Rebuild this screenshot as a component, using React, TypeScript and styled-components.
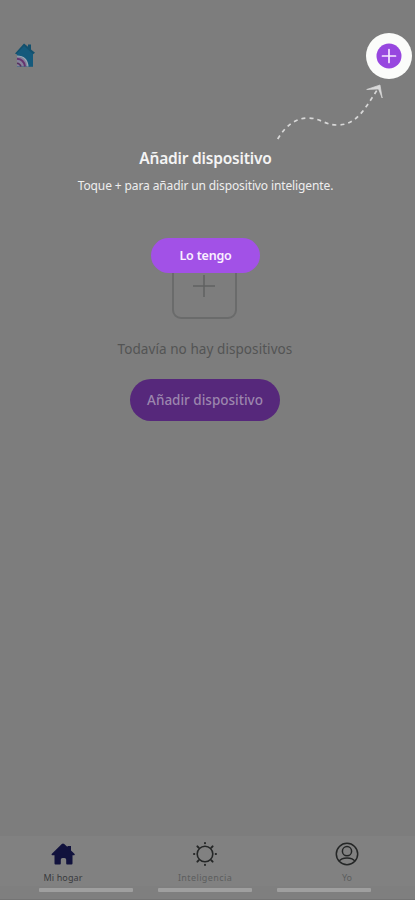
import React from 'react';
import styled, { createGlobalStyle } from 'styled-components';

const GlobalStyle = createGlobalStyle`
  * { box-sizing: border-box; }
  body { margin: 0; background: #7d7d7d; font-family: "Noto Sans", "Open Sans", sans-serif; }
  svg { display: block; }
`;

const Screen = styled.div`
  position: relative;
  display: flex;
  flex-direction: column;
  height: 900px;
  overflow: hidden;
  background: #7d7d7d;
`;

const Header = styled.header`
  height: 110px;
  padding: 41px 14px 0;
`;

const EmptyState = styled.main`
  flex: 1;
  display: flex;
  flex-direction: column;
  align-items: center;
  padding: 144px 5px 0 0;
`;

const Placeholder = styled.div`
  display: grid;
  place-items: center;
  width: 65px;
  height: 65px;
  margin-right: 2px;
  padding-bottom: 2px;
  border: 2px solid #6a6b6b;
  border-radius: 9px;
  color: #606161;
`;

const Label = styled.span<{ $size: number; $line: number; $color: string; $weight?: number; $spacing?: number }>`
  font-size: ${(p) => p.$size}px;
  line-height: ${(p) => p.$line}px;
  color: ${(p) => p.$color};
  font-weight: ${(p) => p.$weight ?? 400};
  letter-spacing: ${(p) => p.$spacing ?? 0}px;
  white-space: nowrap;
`;

const EmptyText = styled.div`
  display: flex;
  margin: 20px 0;
`;

const AddButton = styled.button`
  width: 150px;
  height: 42px;
  padding: 0;
  border: 0;
  border-radius: 21px;
  background: #56287b;
  font-family: inherit;
`;

const TabBar = styled.nav`
  display: grid;
  grid-template-columns: 126px 158px 126px;
  height: 50px;
  background: #818181;
`;

const Tab = styled.div`
  display: flex;
  flex-direction: column;
  align-items: center;
  gap: 4px;
  padding-top: 4px;
`;

const SystemBar = styled.footer`
  display: flex;
  gap: 25px;
  height: 14px;
  padding: 2px 0 0 39px;
  background: #7f7f7f;
  border-bottom: 1px solid #747474;
`;

const Handle = styled.div`
  width: 94px;
  height: 4px;
  border-radius: 1px;
  background: #9f9f9f;
`;

const Guide = styled.section`
  position: absolute;
  inset: 0 0 auto;
  display: flex;
  flex-direction: column;
  align-items: center;
  padding: 33px 4px 0 0;
`;

const Spotlight = styled.div`
  display: grid;
  place-items: center;
  align-self: flex-end;
  width: 46px;
  height: 46px;
  margin-right: -1px;
  border-radius: 50%;
  background: #fbfcfa;
`;

const Arrow = styled.svg`
  align-self: flex-end;
  margin: 3px 25px 6px 0;
`;

const GuideText = styled.div`
  display: flex;
  flex-direction: column;
  align-items: center;
  gap: 8px;
`;

const GotIt = styled.button`
  width: 109px;
  height: 35px;
  margin-top: 42px;
  padding: 1px 0 0;
  border: 0;
  border-radius: 18px;
  background: #a251e7;
  font-family: inherit;
`;

const LogoIcon = () => (
  <svg width="23" height="28" viewBox="0 0 23 28">
    <path d="M1 12.5 10 2.5l4 3.2V3.5h3v5l4 3.2-2 1.5v12.3H3V13.5Z" fill="#13506d" />
    <path d="M3 12.5 10 5l9 8v12.5H3Z" fill="#155a7c" />
    <path d="M3 15q10 0 11 10.5H3Z" fill="#85829b" />
    <path d="M3 17.7q7 .4 8 7.8" fill="none" stroke="#66336f" strokeWidth="2" />
    <path d="M3 22.2q3 .3 4 3.3" fill="none" stroke="#57305d" strokeWidth="1.5" />
    <path d="M3 15q10 0 11 10.5" fill="none" stroke="#9da9b5" strokeWidth="1.2" />
  </svg>
);

const HomeIcon = () => (
  <svg width="24" height="28" viewBox="0 0 24 28">
    <path d="M12 3.5q.6 0 1.2.6l3.3 3V6H20v4.5l3.4 3.2q.9 1-.3 1.5H21.5v8.3q0 1-1 1H16q-.8 0-.8-1v-3.8q0-1.6-1.7-1.6h-2q-1.7 0-1.7 1.6v3.8q0 1-.8 1H4.5q-1 0-1-1v-8.3H1.2q-1.2-.5-.3-1.5l9.9-9.6q.6-.6 1.2-.6Z" fill="#11123d" />
  </svg>
);

const SunIcon = () => (
  <svg width="26" height="28" viewBox="0 0 26 28" fill="none" stroke="#242626" strokeLinecap="round">
    <circle cx="13" cy="14" r="7.8" strokeWidth="1.6" />
    <path d="M13 3v.3M13 24.7v.3M2 14h.3M23.7 14h.3M5.4 6.4l1.2 1.2M19.4 20.4l1.2 1.2M20.6 6.4l-1.2 1.2M6.6 20.4l-1.2 1.2" strokeWidth="2" />
  </svg>
);

const UserIcon = () => (
  <svg width="24" height="28" viewBox="0 0 24 28" fill="none" stroke="#242626" strokeWidth="1.5">
    <circle cx="12" cy="14" r="10.7" />
    <circle cx="12" cy="11.2" r="4.6" />
    <path d="M4 21.5q2-3.5 8-3.5t8 3.5" />
  </svg>
);

export default function App() {
  return (
    <>
      <GlobalStyle />
      <Screen>
        <Header><LogoIcon /></Header>
        <EmptyState>
          <Placeholder>
            <svg width="24" height="24" viewBox="0 0 24 24" stroke="currentColor" strokeWidth="1.5"><path d="M12 1v22M1 12h22" /></svg>
          </Placeholder>
          <EmptyText>
            <Label $size={13.5} $line={20} $color="#535454" $spacing={0.07}>Todavía no hay dispositivos</Label>
          </EmptyText>
          <AddButton>
            <Label $size={13.5} $line={20} $color="#9c86ae" $weight={500}>Añadir dispositivo</Label>
          </AddButton>
        </EmptyState>
        <TabBar>
          <Tab><HomeIcon /><Label $size={9} $line={11} $color="#393b3d" $spacing={0.12}>Mi hogar</Label></Tab>
          <Tab><SunIcon /><Label $size={9} $line={11} $color="#5c5e5e" $spacing={0.4}>Inteligencia</Label></Tab>
          <Tab><UserIcon /><Label $size={9} $line={11} $color="#5c5e5e">Yo</Label></Tab>
        </TabBar>
        <SystemBar><Handle /><Handle /><Handle /></SystemBar>
        <Guide>
          <Spotlight>
            <svg width="26" height="26" viewBox="0 0 26 26"><circle cx="13" cy="13" r="12.5" fill="#9747df" /><path d="M13 6.5v13M6.5 13h13" stroke="#f7e9ff" strokeWidth="1.7" strokeLinecap="round" /></svg>
          </Spotlight>
          <Arrow width="110" height="60" viewBox="0 0 110 60" fill="none" stroke="#d8d8d8">
            <path d="M1.7 57C10 43 20 36 32 36S49 43 61 43C80 43 87 30 103 5" strokeWidth="1.7" strokeDasharray="4 4" />
            <path d="m90.7 7.5 13.3-4.5 2.2 13-3.7-9Z" fill="#d8d8d8" strokeWidth=".7" />
          </Arrow>
          <GuideText>
            <Label $size={15.5} $line={20} $color="#f4f4f4" $weight={600} $spacing={-0.2}>Añadir dispositivo</Label>
            <Label $size={12} $line={20} $color="#eeeeee" $spacing={-0.12}>Toque + para añadir un dispositivo inteligente.</Label>
          </GuideText>
          <GotIt><Label $size={12.5} $line={20} $color="#faf0ff" $weight={600} $spacing={-0.2}>Lo tengo</Label></GotIt>
        </Guide>
      </Screen>
    </>
  );
}
